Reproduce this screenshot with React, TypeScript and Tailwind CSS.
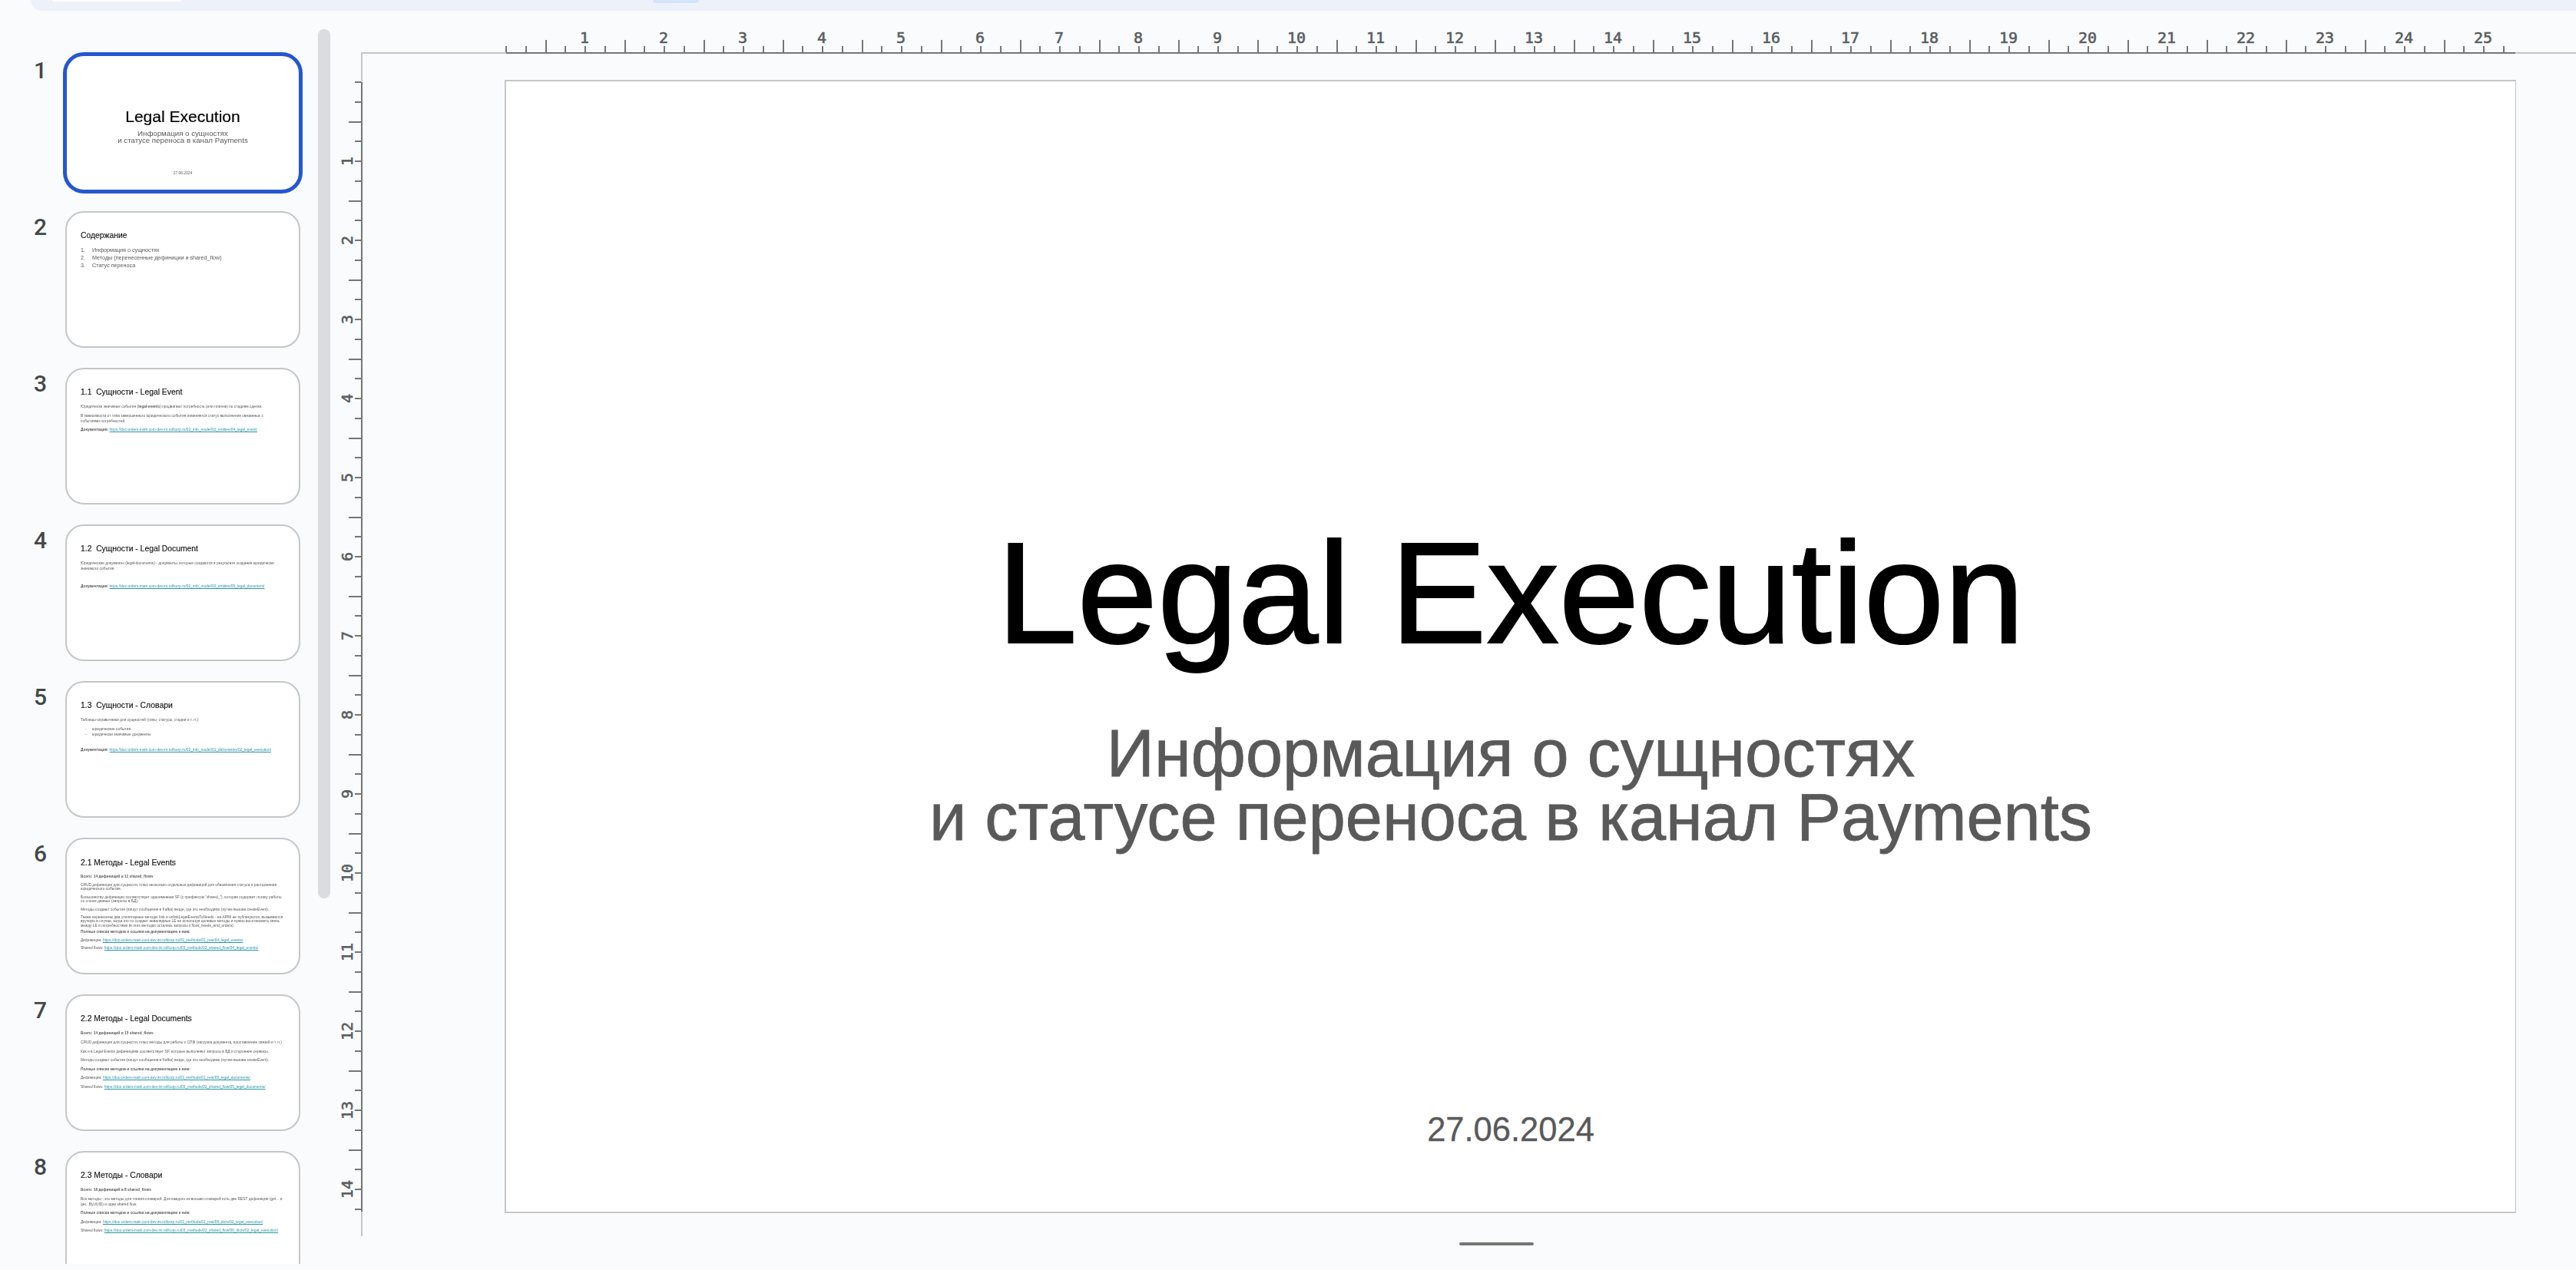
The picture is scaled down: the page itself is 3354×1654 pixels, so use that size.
import type { ReactNode } from 'react'

const HOST = 'https://doc-orders-main.com-dev.int.rolfcorp.ru'

const hTicks = Array.from({ length: 102 }, (_, i) => i)
const vTicks = Array.from({ length: 58 }, (_, i) => i)

function TopRuler() {
  return (
    <svg width={2918} height={32} className="block shrink-0">
      <rect x={34} y={30} width={2884} height={2} className="fill-[#c4c7c5]" />
      <rect x={223} y={30} width={2616} height={2} className="fill-[#747775]" />
      {hTicks.map((i) => {
        const x = Math.round(223 + i * 25.75)
        const long = i % 4 === 2
        return <rect key={i} x={x - 1} y={long ? 14 : 22} width={2} height={long ? 16 : 8} className="fill-[#747775]" />
      })}
      {Array.from({ length: 25 }, (_, n) => n + 1).map((n) => (
        <text key={n} x={223 + n * 103 - 1} y={18} textAnchor="middle" className="fill-[#5a5d60] text-[20px] font-['DejaVu_Sans_Mono',monospace] [stroke:#5a5d60] [stroke-width:0.6px]">
          {n}
        </text>
      ))}
    </svg>
  )
}

function SideRuler() {
  return (
    <svg width={37} height={1540} className="block shrink-0">
      <rect x={34} y={0} width={2} height={1540} className="fill-[#c4c7c5]" />
      <rect x={34} y={37} width={2} height={1471} className="fill-[#747775]" />
      {vTicks.map((i) => {
        const y = Math.round(37 + i * 25.75)
        const long = i % 4 === 2
        return <rect key={i} x={long ? 18 : 26} y={y - 1} width={long ? 16 : 8} height={2} className="fill-[#747775]" />
      })}
      {Array.from({ length: 14 }, (_, n) => n + 1).map((n) => {
        const y = 37 + n * 103
        return (
          <text key={n} transform={`translate(23 ${y}) rotate(-90)`} textAnchor="middle" className="fill-[#5a5d60] text-[20px] font-['DejaVu_Sans_Mono',monospace] [stroke:#5a5d60] [stroke-width:0.6px]">
            {n}
          </text>
        )
      })}
    </svg>
  )
}

function Link({ path }: { path: string }) {
  return <span className="text-[#2a94a8] underline">{HOST + path}</span>
}

function Thumb({ n, active, children }: { n: number; active?: boolean; children: ReactNode }) {
  return (
    <div className="flex items-start shrink-0">
      <div className="w-[61px] text-right text-[30px] leading-[42px] font-medium text-[#444746] font-['Roboto',sans-serif]">{n}</div>
      <div
        className={
          'ml-[24px] w-[306px] h-[178px] shrink-0 rounded-[24px] bg-white overflow-hidden border-2 ' +
          (active ? 'border-[#2557d0] ring-[3px] ring-[#2557d0]' : 'border-[#c4c7c5]')
        }
      >
        <div className="blur-[0.3px]">{children}</div>
      </div>
    </div>
  )
}

function Title({ children }: { children: ReactNode }) {
  return <div className="text-[10.35px] leading-[14px] whitespace-pre text-[#111] [-webkit-text-stroke:0.15px_#111]">{children}</div>
}

function Line({ className, children }: { className?: string; children: ReactNode }) {
  return <div className={'text-[4.85px] leading-[7px] text-[#595959] whitespace-pre ' + (className || '')}>{children}</div>
}

function Sidebar() {
  return (
    <div className="relative w-[436px] h-[1608px] shrink-0 overflow-hidden">
      <div className="absolute left-[414px] top-0 w-[16px] h-[1132px] rounded-full bg-[#dadce0]" />
      <div className="flex flex-col gap-[26px] pt-[33px]">
        <Thumb n={1} active>
          <div className="flex flex-col items-center pt-[67px] text-center">
            <div className="text-[21px] leading-[24px] text-black [-webkit-text-stroke:0.2px_#000]">Legal Execution</div>
            <div className="mt-[5px] text-[9.7px] leading-[9px] text-[#595959]">
              Информация о сущностях
              <br />и статусе переноса в канал Payments
            </div>
            <div className="mt-[36px] text-[4.9px] leading-[6px] text-[#595959]">27.06.2024</div>
          </div>
        </Thumb>

        <Thumb n={2}>
          <div className="pt-[23px] pl-[18px]">
            <Title>Содержание</Title>
            <div className="mt-[7px] text-[7.2px] leading-[10px] text-[#595959]">
              <div className="flex"><span className="w-[15px]">1.</span>Информация о сущностях</div>
              <div className="flex"><span className="w-[15px]">2.</span>Методы (перенесенные дефиниции и shared_flow)</div>
              <div className="flex"><span className="w-[15px]">3.</span>Статус переноса</div>
            </div>
          </div>
        </Thumb>

        <Thumb n={3}>
          <div className="pt-[23px] pl-[18px]">
            <Title>1.1  Сущности - Legal Event</Title>
            <Line className="mt-[8px]">
              Юридически значимые события (<b>legal-events</b>) продвигают потребность (или платеж) по стадиям сделки.
            </Line>
            <Line className="mt-[5px]">В зависимости от типа завершенного юридического события изменяется статус выполнения связанных с</Line>
            <Line>событиями потребностей.</Line>
            <Line className="mt-[4px]">
              <b>Документация:</b> <Link path="/02_info_model/02_entities/04_legal_event/" />
            </Line>
          </div>
        </Thumb>

        <Thumb n={4}>
          <div className="pt-[23px] pl-[18px]">
            <Title>1.2  Сущности - Legal Document</Title>
            <Line className="mt-[8px]">Юридические документы (legal-documents) - документы, которые создаются в результате создания юридически</Line>
            <Line>значимого события.</Line>
            <Line className="mt-[16px]">
              <b>Документация:</b> <Link path="/02_info_model/02_entities/05_legal_document/" />
            </Line>
          </div>
        </Thumb>

        <Thumb n={5}>
          <div className="pt-[23px] pl-[18px]">
            <Title>1.3  Сущности - Словари</Title>
            <Line className="mt-[8px]">Таблицы-справочники для сущностей (типы, статусы, стадии и т. п.):</Line>
            <Line className="mt-[5px] pl-[6px]"><span className="inline-block w-[9px]">-</span>юридические события</Line>
            <Line className="pl-[6px]"><span className="inline-block w-[9px]">-</span>юридически значимые документы</Line>
            <Line className="mt-[13px]">
              <b>Документация:</b> <Link path="/02_info_model/01_dictionaries/02_legal_execution/" />
            </Line>
          </div>
        </Thumb>

        <Thumb n={6}>
          <div className="pt-[24px] pl-[18px]">
            <Title>2.1 Методы - Legal Events</Title>
            <Line className="mt-[7px] font-bold">Всего: 14 дефиниций и 11 shared_flows</Line>
            <div className="mt-[5px] leading-[5.3px] text-[4.85px] text-[#595959] whitespace-pre">
              <div>CRUD дефиниции для сущности, плюс несколько отдельных дефиниций для обновления статуса и расторжения</div>
              <div>юридического события.</div>
              <div className="mt-[5.5px]">Большинству дефиниции соответствует одноименная SF (с префиксом “shared_”), которая содержит логику работы</div>
              <div>со слоем данных (запросы в БД).</div>
              <div className="mt-[5.5px]">Методы создают события (пишут сообщения в Kafka) везде, где это необходимо (путем вызова createEvent).</div>
              <div className="mt-[4.5px]">Также перенесены два утилитарные метода: link и unlinkLegalEventsToNeeds - на APIM не публикуются, вызываются</div>
              <div>вручную в случае, когда кто-то создает невалидные LE не используя целевые методы и нужно восстановить связь</div>
              <div>между LE и потребностями (в этих методах остались запросы к flora_needs_and_orders).</div>
            </div>
            <Line className="mt-[2.5px] font-bold">Полные списки методов и ссылки на документацию к ним:</Line>
            <Line className="mt-[4px]">Дефиниции: <Link path="/03_methods/01_rest/04_legal_events/" /></Line>
            <Line className="mt-[3px]">Shared flows: <Link path="/03_methods/02_shared_flow/04_legal_events/" /></Line>
          </div>
        </Thumb>

        <Thumb n={7}>
          <div className="pt-[23px] pl-[18px]">
            <Title>2.2 Методы - Legal Documents</Title>
            <Line className="mt-[8px] font-bold">Всего: 14 дефиниций и 15 shared_flows</Line>
            <Line className="mt-[5px]">CRUD дефиниции для сущности, плюс методы для работы с СПФ (загрузка документа, проставление связей и т. п.)</Line>
            <Line className="mt-[5px]">Как и в Legal Events дефинициям соответствует SF, которые выполняют запросы в БД и сторонние сервисы.</Line>
            <Line className="mt-[4px]">Методы создают события (пишут сообщения в Kafka) везде, где это необходимо (путем вызова createEvent).</Line>
            <Line className="mt-[5px] font-bold">Полные списки методов и ссылки на документацию к ним:</Line>
            <Line className="mt-[4px]">Дефиниции: <Link path="/03_methods/01_rest/05_legal_documents/" /></Line>
            <Line className="mt-[5px]">Shared flows: <Link path="/03_methods/02_shared_flow/05_legal_documents/" /></Line>
          </div>
        </Thumb>

        <Thumb n={8}>
          <div className="pt-[23px] pl-[18px]">
            <Title>2.3 Методы - Словари</Title>
            <Line className="mt-[8px] font-bold">Всего: 16 дефиниций и 8 shared_flows</Line>
            <Line className="mt-[5px]">Все методы - это методы для чтения словарей. Для каждого из восьми словарей есть две REST дефиниции (get... и</Line>
            <Line>get...ByUUID) и одна shared flow.</Line>
            <Line className="mt-[4px] font-bold">Полные списки методов и ссылки на документацию к ним:</Line>
            <Line className="mt-[5px]">Дефиниции: <Link path="/03_methods/01_rest/06_dicts/02_legal_execution/" /></Line>
            <Line className="mt-[4px]">Shared flows: <Link path="/03_methods/02_shared_flow/06_dicts/02_legal_execution/" /></Line>
          </div>
        </Thumb>
      </div>
    </div>
  )
}

function Slide() {
  return (
    <div className="w-[2619px] h-[1476px] bg-white border-2 border-r border-[#c4c7c5] flex flex-col items-center text-center">
      <div className="mt-[558px] text-[188px] leading-[216px] text-black [-webkit-text-stroke:2px_#000]">Legal Execution</div>
      <div className="mt-[60px] text-[86.5px] leading-[83px] text-[#595959] [-webkit-text-stroke:0.8px_#595959]">
        Информация о сущностях
        <br />и статусе переноса в канал Payments
      </div>
      <div className="mt-[340px] text-[43.5px] leading-[50px] text-[#595959] [-webkit-text-stroke:0.3px_#595959]">27.06.2024</div>
    </div>
  )
}

export default function App() {
  return (
    <div className="h-screen w-full overflow-hidden bg-[#f9fbfd] font-['Liberation_Sans',Arial,sans-serif]">
      <div className="h-[14px] ml-[40px] rounded-bl-[24px] bg-[#edf2fa] flex items-start overflow-hidden">
        <div className="ml-[28px] w-[168px] h-[2px] rounded-b-[6px] bg-white" />
        <div className="ml-[614px] w-[60px] h-[4px] rounded-b-[6px] bg-[#d3e3fd]" />
      </div>
      <div className="flex pt-[24px]">
        <Sidebar />
        <div className="flex flex-col">
          <TopRuler />
          <div className="flex">
            <SideRuler />
            <div className="ml-[184px] mt-[34px] flex flex-col">
              <Slide />
              <div className="mt-[38px] ml-[1243px] w-[97px] h-[4px] rounded-full bg-[#747775]" />
            </div>
          </div>
        </div>
      </div>
    </div>
  )
}
